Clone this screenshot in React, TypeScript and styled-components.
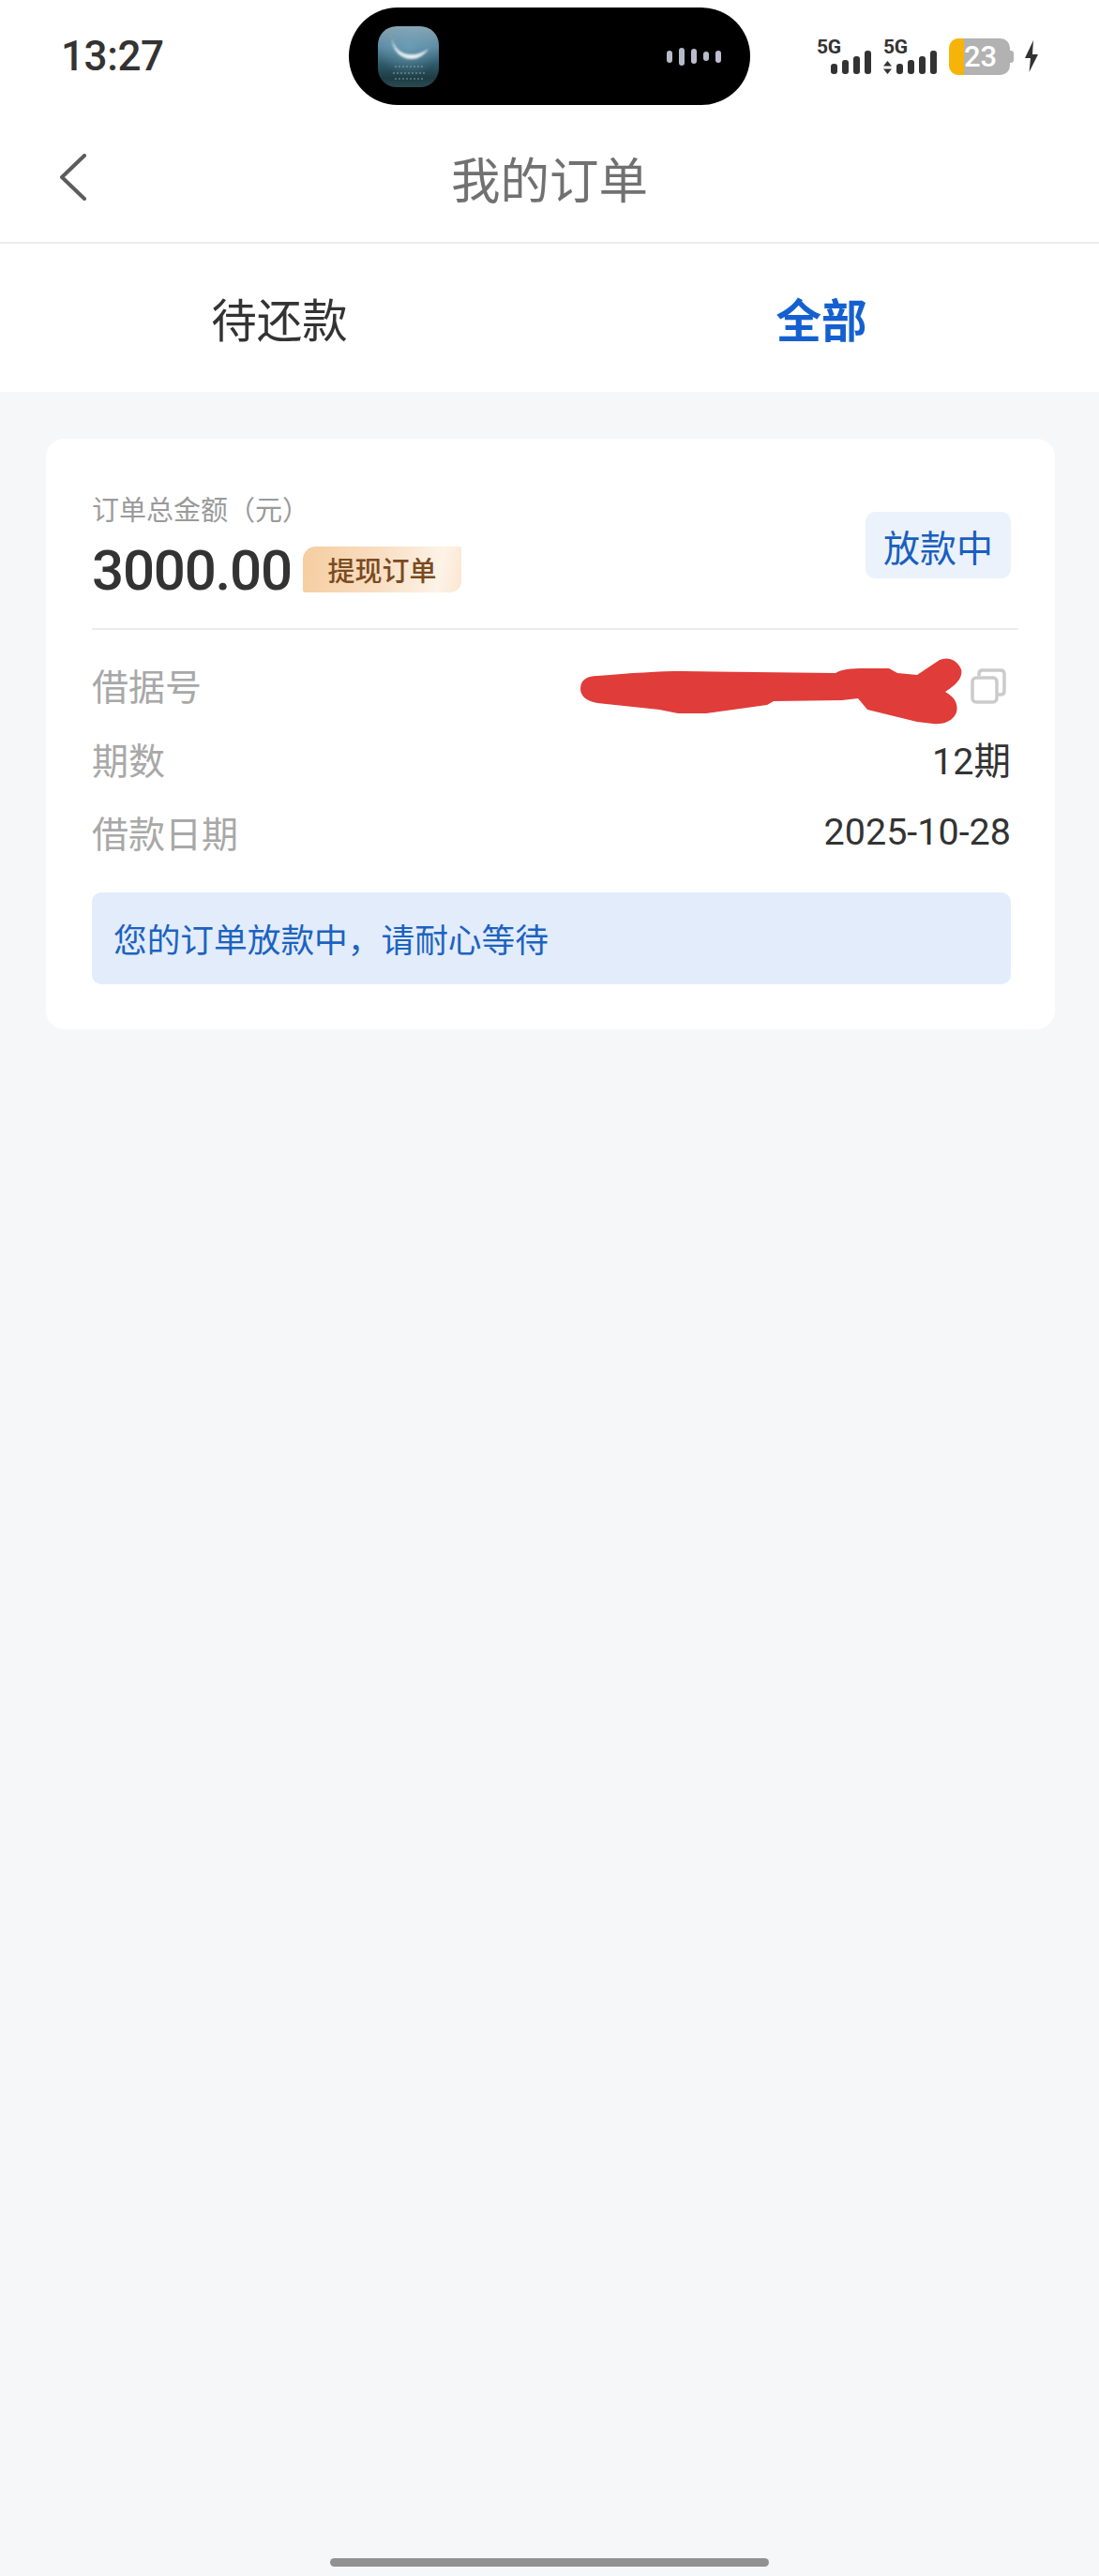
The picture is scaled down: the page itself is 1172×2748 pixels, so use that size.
import React from 'react'
import styled, { createGlobalStyle } from 'styled-components'
//[ package ]

const FONT = `Roboto, 'Noto Sans CJK SC', 'Noto Sans', sans-serif`

const GlobalStyle = createGlobalStyle`
	html, body {
		margin: 0;
		padding: 0;
		background: #f6f7f9;
	}
	* {
		box-sizing: border-box;
	}
`

const DOTS = [
	{ h: 13, c: '#b6bcc6' },
	{ h: 19, c: '#b4bac8' },
	{ h: 16, c: '#bcbccd' },
	{ h: 10, c: '#b8bcc4' },
	{ h: 13, c: '#c0bcd4' },
]

const ROWS = [
	{ label: '期数', value: '12期' },
	{ label: '借款日期', value: '2025-10-28' },
]

//=> DOM
export default () => (
	<Page>
		<GlobalStyle />
		<StatusBar>
			<Time>13:27</Time>
			<Island>
				<AppIcon>
					<svg width='65' height='65' viewBox='0 0 65 65'>
						<defs>
							<filter id='soft'>
								<feGaussianBlur stdDeviation='1.1' />
							</filter>
						</defs>
						<path
							d='M15 14 C16 28 26 35 36 35 C44 35 50 30 54 24 C46 30 34 32 26 28 C20 25 17 20 15 14 Z'
							fill='#e4edf1'
							filter='url(#soft)'
						/>
						<path
							d='M14 10 L18 26 M18 43 H50 M16 50 H52 M18 56 H48'
							stroke='#8fa8aa'
							strokeWidth='1.6'
							strokeDasharray='2 2'
							opacity='0.65'
						/>
					</svg>
				</AppIcon>
				<AudioDots>
					{DOTS.map((d, i) => (
						<AudioDot key={i} $h={d.h} $c={d.c} />
					))}
				</AudioDots>
			</Island>
			<Indicators>
				<Signal>
					<NetLabel>5G</NetLabel>
					<Bars $offset={15}>
						<Bar $h={11} />
						<Bar $h={15} />
						<Bar $h={19} />
						<Bar $h={25} />
					</Bars>
				</Signal>
				<Signal>
					<NetLabel>5G</NetLabel>
					<Bars $offset={0}>
						<svg width='9' height='14' viewBox='0 0 9 14'>
							<path d='M4.5 0 L9 5.6 H0 Z M0 8.4 H9 L4.5 14 Z' fill='#333' />
						</svg>
						<Bar $h={11} />
						<Bar $h={15} />
						<Bar $h={19} />
						<Bar $h={25} />
					</Bars>
				</Signal>
				<Battery>23</Battery>
				<svg width='14' height='34' viewBox='0 0 14 34'>
					<path d='M9 0 L0 19 H6 L4.5 34 L14 15 H8 Z' fill='#333' />
				</svg>
			</Indicators>
		</StatusBar>

		<NavBar>
			<svg width='30' height='50' viewBox='0 0 30 50'>
				<path
					d='M27 2 L3 25 L27 48'
					fill='none'
					stroke='#5c5c5c'
					strokeWidth='4'
					strokeLinecap='round'
					strokeLinejoin='round'
				/>
			</svg>
			<Title>我的订单</Title>
		</NavBar>

		<Tabs>
			<Tab>待还款</Tab>
			<Tab $active>全部</Tab>
		</Tabs>

		<Card>
			<Header>
				<div>
					<AmountLabel>订单总金额（元）</AmountLabel>
					<AmountLine>
						<Amount>3000.00</Amount>
						<OrderTag>提现订单</OrderTag>
					</AmountLine>
				</div>
				<StatusTag>放款中</StatusTag>
			</Header>
			<Divider />
			<Row>
				<RowLabel>借据号</RowLabel>
				<Scribble width='430' height='84' viewBox='0 0 430 84'>
					<path
						d='M16 45 C16 36 22 31 34 31 C70 28 100 26 125 26 L288 28 C294 24 304 23 320 23 L345 23 L354 28 L375 30 L399 14 C408 10 418 14 422 24 C424 32 418 40 405 48 C416 54 419 62 417 70 C413 80 402 83 392 82 L375 80 L322 67 L312 55 L295 57 L222 58 L215 62 L150 71 L120 71 L100 67 L34 60 C22 58 16 52 16 45 Z'
						fill='#e03c3a'
					/>
				</Scribble>
				<CopyIcon width='38' height='38' viewBox='0 0 38 38'>
					<path
						d='M9 8 V6 Q9 2 13 2 H32 Q36 2 36 6 V24 Q36 28 32 28 H29'
						fill='none'
						stroke='#cbcbcb'
						strokeWidth='3.5'
					/>
					<rect
						x='2'
						y='10'
						width='26'
						height='26'
						rx='4'
						fill='none'
						stroke='#cbcbcb'
						strokeWidth='3.5'
					/>
				</CopyIcon>
			</Row>
			{ROWS.map((r) => (
				<Row key={r.label}>
					<RowLabel>{r.label}</RowLabel>
					<RowValue>{r.value}</RowValue>
				</Row>
			))}
			<Notice>您的订单放款中，请耐心等待</Notice>
		</Card>

		<HomeIndicator />
	</Page>
)

//=> Style
const Page = styled.div`
	display: flex;
	flex-direction: column;
	height: 2748px;
	overflow: hidden;
	background: #f6f7f9;
	font-family: ${FONT};
`

const StatusBar = styled.div`
	display: flex;
	align-items: center;
	height: 120px;
	padding-left: 65px;
	background: #fff;
`

const Time = styled.div`
	width: 307px;
	font-size: 44px;
	font-weight: 500;
	letter-spacing: -0.4px;
	color: #333;
`

const Island = styled.div`
	display: flex;
	align-items: center;
	justify-content: space-between;
	width: 428px;
	height: 104px;
	padding: 0 31px;
	border-radius: 52px;
	background: #000;
`

const AppIcon = styled.div`
	width: 65px;
	height: 65px;
	border-radius: 20px;
	overflow: hidden;
	background:
		radial-gradient(circle at 50% 35%, rgba(120, 170, 195, 0.55) 0%, rgba(120, 170, 195, 0) 60%),
		linear-gradient(180deg, #8aa5b2 0%, #5a8aa3 35%, #2f5a6a 62%, #1d3c45 85%, #2a4a50 100%);
`

const AudioDots = styled.div`
	display: flex;
	align-items: center;
	gap: 7px;
`

const AudioDot = styled.span<{ $h: number; $c: string }>`
	width: 6px;
	height: ${(p) => p.$h}px;
	border-radius: 3px;
	background: ${(p) => p.$c};
`

const Indicators = styled.div`
	display: flex;
	align-items: center;
	margin-left: 71px;
	gap: 13px;
`

const Signal = styled.div`
	position: relative;
	display: flex;
	align-items: flex-end;
	height: 39px;
	padding-bottom: 1px;
`

const NetLabel = styled.span`
	position: absolute;
	top: -1px;
	left: 0;
	font-size: 21px;
	line-height: 20px;
	font-weight: 700;
	letter-spacing: -0.3px;
	color: #333;
`

const Bars = styled.div<{ $offset: number }>`
	display: flex;
	align-items: flex-end;
	gap: 5px;
	margin-left: ${(p) => p.$offset}px;
`

const Bar = styled.span<{ $h: number }>`
	width: 7px;
	height: ${(p) => p.$h}px;
	border-radius: 3px;
	background: #333;
`

const Battery = styled.div`
	position: relative;
	width: 65px;
	height: 39px;
	margin-right: 3px;
	padding-left: 16px;
	border-radius: 10px;
	background: linear-gradient(90deg, #f7b408 16px, #b2b2b2 16px);
	font-size: 31px;
	line-height: 39px;
	font-weight: 500;
	color: #fff;
	&::after {
		content: '';
		position: absolute;
		top: 13px;
		right: -4px;
		width: 4px;
		height: 13px;
		border-radius: 0 3px 3px 0;
		background: #b2b2b2;
	}
`

const NavBar = styled.div`
	display: flex;
	align-items: center;
	position: relative;
	height: 140px;
	padding-left: 63px;
	background: #fff;
	border-bottom: 2px solid #ececec;
`

const Title = styled.h1`
	position: absolute;
	left: 0;
	right: 0;
	margin: 0;
	text-align: center;
	font-size: 52.5px;
	font-weight: 400;
	color: #717171;
`

const Tabs = styled.div`
	display: grid;
	grid-template-columns: 1fr 1fr;
	align-items: center;
	height: 158px;
	padding: 0 7px 0 9px;
	background: #fff;
`

const Tab = styled.div<{ $active?: boolean }>`
	text-align: center;
	font-size: 48.5px;
	font-weight: ${(p) => (p.$active ? 700 : 400)};
	color: ${(p) => (p.$active ? '#1560d0' : '#333')};
`

const Card = styled.section`
	display: flex;
	flex-direction: column;
	margin: 50px 47px 0 49px;
	padding: 58px 47px 48px 49px;
	border-radius: 20px;
	background: #fff;
`

const Header = styled.div`
	display: flex;
	align-items: flex-start;
	justify-content: space-between;
`

const AmountLabel = styled.div`
	font-size: 29px;
	line-height: 38px;
	color: #9a9a9a;
`

const AmountLine = styled.div`
	display: flex;
	align-items: center;
	height: 88px;
`

const Amount = styled.div`
	font-size: 60px;
	font-weight: 500;
	letter-spacing: -1.2px;
	color: #333;
`

const OrderTag = styled.div`
	display: flex;
	align-items: center;
	justify-content: center;
	width: 169px;
	height: 49px;
	margin: 0 0 2px 12px;
	border-radius: 14px 2px 12px 2px;
	background: linear-gradient(100deg, #f5cda0 0%, #f9dfc4 50%, #fdf3e8 85%, #fbe6d0 100%);
	font-size: 29px;
	font-weight: 500;
	color: #7a4a22;
`

const StatusTag = styled.div`
	display: flex;
	align-items: center;
	justify-content: center;
	width: 155px;
	height: 71px;
	margin-top: 20px;
	border-radius: 10px;
	background: #ebf2fc;
	font-size: 39px;
	color: #1a5fbe;
`

const Divider = styled.hr`
	width: calc(100% + 8px);
	height: 2px;
	margin: 18px 0 19px;
	border: 0;
	background: #ececec;
`

const Row = styled.div`
	position: relative;
	display: flex;
	align-items: center;
	justify-content: space-between;
	height: 78.5px;
`

const RowLabel = styled.span`
	font-size: 39px;
	color: #a8a8a8;
`

const RowValue = styled.span`
	font-size: 39.5px;
	color: #333;
`

const Scribble = styled.svg`
	position: absolute;
	top: -1px;
	right: 45px;
`

const CopyIcon = styled.svg`
	margin: 4px 5px 0 0;
`

const Notice = styled.div`
	display: flex;
	align-items: center;
	height: 98px;
	margin-top: 25px;
	padding-left: 23px;
	border-radius: 10px;
	background: #e2ecfb;
	font-size: 35.7px;
	color: #1c63c0;
`

const HomeIndicator = styled.div`
	align-self: center;
	width: 468px;
	height: 9px;
	margin-top: auto;
	margin-bottom: 10px;
	border-radius: 5px;
	background: #919191;
`
